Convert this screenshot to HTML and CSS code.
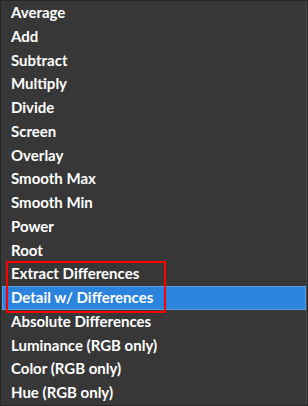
FILE: index.html
```html
<!DOCTYPE html>
<html>
<head>
<meta charset="utf-8">
<link rel="stylesheet" href="styles.css">
</head>
<body>
<div class="menu">
  <ul class="list">
    <li class="item">Average</li>
    <li class="item">Add</li>
    <li class="item">Subtract</li>
    <li class="item">Multiply</li>
    <li class="item">Divide</li>
    <li class="item">Screen</li>
    <li class="item">Overlay</li>
    <li class="item">Smooth Max</li>
    <li class="item">Smooth Min</li>
    <li class="item">Power</li>
    <li class="item">Root</li>
    <li class="item">Extract Differences</li>
    <li class="item selected">Detail w/ Differences</li>
    <li class="item">Absolute Differences</li>
    <li class="item">Luminance (RGB only)</li>
    <li class="item">Color (RGB only)</li>
    <li class="item">Hue (RGB only)</li>
  </ul>
  <div class="callout"></div>
</div>
</body>
</html>
```
FILE: styles.css
```css
html, body {
  margin: 0;
  padding: 0;
  background: #363636;
}
.menu {
  position: relative;
  width: 308px;
  height: 406px;
  box-sizing: border-box;
  border: 1px solid #262626;
  background: #373737;
  box-shadow: inset -1px 0 0 #4a4a4a;
  font-family: Lato, "Liberation Sans", sans-serif;
  font-weight: 700;
  font-size: 15px;
  color: #ffffff;
}
.list {
  list-style: none;
  margin: 0;
  padding: 0 1px 0 1px;
}
.item {
  height: 23.75px;
  line-height: 23.75px;
  padding-left: 9px;
  box-sizing: border-box;
}
.selected {
  background: #2a83dc;
  box-shadow: inset 0 0 0 1px #5d9fe3;
}
.callout {
  position: absolute;
  left: 5px;
  top: 260px;
  width: 160px;
  height: 52px;
  box-sizing: border-box;
  border: 2px solid #ff0000;
}
```
